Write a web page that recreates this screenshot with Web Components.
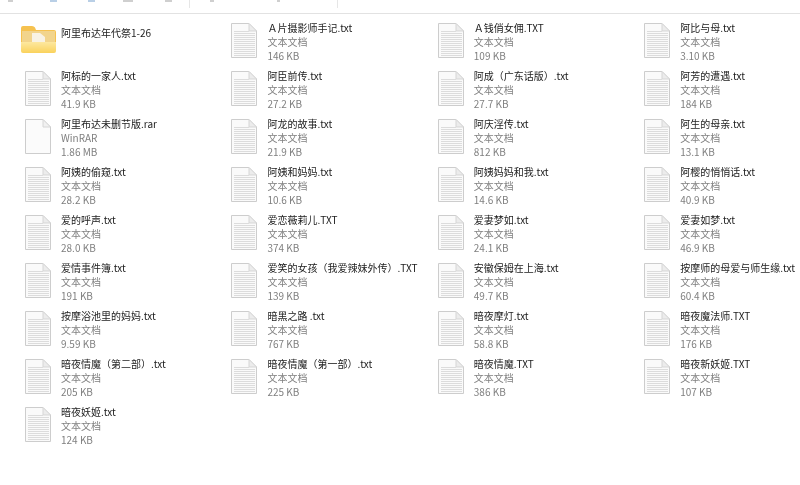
<!DOCTYPE html>
<html>
<head>
<meta charset="utf-8">
<style>
  html, body { margin: 0; background: #fff; }
  body { width: 800px; height: 485px; overflow: hidden; font-family: "Noto Sans CJK SC", "Liberation Sans", sans-serif; }
</style>
</head>
<body>
<ribbon-strip></ribbon-strip>
<file-grid></file-grid>

<script>
const FILES = [
  ["folder", "阿里布达年代祭1-26", "", ""],
  ["txt", "Ａ片摄影师手记.txt", "文本文档", "146 KB"],
  ["txt", "Ａ钱俏女佣.TXT", "文本文档", "109 KB"],
  ["txt", "阿比与母.txt", "文本文档", "3.10 KB"],
  ["txt", "阿标的一家人.txt", "文本文档", "41.9 KB"],
  ["txt", "阿臣前传.txt", "文本文档", "27.2 KB"],
  ["txt", "阿成（广东话版）.txt", "文本文档", "27.7 KB"],
  ["txt", "阿芳的遭遇.txt", "文本文档", "184 KB"],
  ["rar", "阿里布达未删节版.rar", "WinRAR", "1.86 MB"],
  ["txt", "阿龙的故事.txt", "文本文档", "21.9 KB"],
  ["txt", "阿庆淫传.txt", "文本文档", "812 KB"],
  ["txt", "阿生的母亲.txt", "文本文档", "13.1 KB"],
  ["txt", "阿姨的偷窥.txt", "文本文档", "28.2 KB"],
  ["txt", "阿姨和妈妈.txt", "文本文档", "10.6 KB"],
  ["txt", "阿姨妈妈和我.txt", "文本文档", "14.6 KB"],
  ["txt", "阿樱的悄悄话.txt", "文本文档", "40.9 KB"],
  ["txt", "爱的呼声.txt", "文本文档", "28.0 KB"],
  ["txt", "爱恋薇莉儿.TXT", "文本文档", "374 KB"],
  ["txt", "爱妻梦如.txt", "文本文档", "24.1 KB"],
  ["txt", "爱妻如梦.txt", "文本文档", "46.9 KB"],
  ["txt", "爱情事件簿.txt", "文本文档", "191 KB"],
  ["txt", "爱笑的女孩（我爱辣妹外传）.TXT", "文本文档", "139 KB"],
  ["txt", "安徽保姆在上海.txt", "文本文档", "49.7 KB"],
  ["txt", "按摩师的母爱与师生缘.txt", "文本文档", "60.4 KB"],
  ["txt", "按摩浴池里的妈妈.txt", "文本文档", "9.59 KB"],
  ["txt", "暗黑之路 .txt", "文本文档", "767 KB"],
  ["txt", "暗夜摩灯.txt", "文本文档", "58.8 KB"],
  ["txt", "暗夜魔法师.TXT", "文本文档", "176 KB"],
  ["txt", "暗夜情魔（第二部）.txt", "文本文档", "205 KB"],
  ["txt", "暗夜情魔（第一部）.txt", "文本文档", "225 KB"],
  ["txt", "暗夜情魔.TXT", "文本文档", "386 KB"],
  ["txt", "暗夜新妖姬.TXT", "文本文档", "107 KB"],
  ["txt", "暗夜妖姬.txt", "文本文档", "124 KB"]
];

// ruled lines of the text page icon
let ruled = "";
for (let y = 8.5; y < 33; y += 2) {
  ruled += `<path d="M3 ${y}H${y < 10 ? 18 : 24}" stroke="#dcdcdc"/>`;
}

const ICONS = {
  txt: `<svg width="26" height="35" viewBox="0 0 26 35">
    <path d="M.5.5H18L25.5 8V34.500H.5Z" fill="#fafafa" stroke="#cdcdcd"/>
    ${ruled}
    <path d="M18 .5V8H25.5Z" fill="#ececec" stroke="#d6d6d6"/>
  </svg>`,
  rar: `<svg width="26" height="35" viewBox="0 0 26 35">
    <path d="M.5.5H18L25.5 8V34.500H.5Z" fill="#fbfbfb" stroke="#cdcdcd"/>
    <path d="M18 .5V8H25.5Z" fill="#f1f1f1" stroke="#d6d6d6"/>
  </svg>`,
  folder: `<svg width="35" height="27" viewBox="0 0 35 27">
    <defs>
      <linearGradient id="front" x1="0" y1="0" x2="0" y2="1">
        <stop offset="0" stop-color="#fde8a0"/>
        <stop offset="1" stop-color="#fad25c"/>
      </linearGradient>
    </defs>
    <path d="M0 2Q0 0 2 0H11Q13 0 14 1.500L15 4H33Q35 4 35 6V17H0Z" fill="#f6c250"/>
    <rect x="1" y="5" width="33" height="12" fill="#f2d48c"/>
    <path d="M11 7H19L24 11V16H11Z" fill="#f8f2e4"/>
    <path d="M0 16H35V25Q35 27 33 27H2Q0 27 0 25Z" fill="url(#front)"/>
  </svg>`
};

class RibbonStrip extends HTMLElement {
  constructor() {
    super();
    this.shadow = this.attachShadow({mode: 'open'});
    this.shadow.innerHTML = `
      <style>
        :host { display: block; height: 13px; border-bottom: 1px solid #e2e2e2; overflow: hidden; }
        .bar { display: flex; height: 13px; padding-left: 8px; }
        .bit { height: 2px; background: #cfcfcf; }
        .sep { width: 1px; height: 8px; background: #e6e6e6; }
      </style>
      <div class="bar">
        <div class="bit" style="width:5px"></div>
        <div class="bit" style="width:7px;margin-left:37px;background:#b9cfe6"></div>
        <div class="bit" style="width:7px;margin-left:31px;background:#b9cfe6"></div>
        <div class="bit" style="width:10px;margin-left:28px"></div>
        <div class="bit" style="width:7px;margin-left:32px"></div>
        <div class="sep" style="margin-left:17px"></div>
        <div class="bit" style="width:4px;margin-left:20px"></div>
        <div class="bit" style="width:3px;margin-left:63px"></div>
        <div class="sep" style="margin-left:57px"></div>
      </div>`;
  }
}

class FileTile extends HTMLElement {
  constructor() {
    super();
    this.shadow = this.attachShadow({mode: 'open'});
    this.shadow.innerHTML = `
      <style>
        :host { display: flex; gap: 5px; height: 48px; font-size: 10px; line-height: 14px; }
        .icon { width: 36px; flex: none; display: flex; justify-content: center; padding-top: 2px; }
        .icon svg { display: block; }
        :host([kind="folder"]) .icon { padding-top: 5px; }
        :host([kind="folder"]) .text { padding-top: 5px; }
        .name { color: #222; white-space: nowrap; }
        .meta { color: #808080; }
      </style>
      <div class="icon"></div>
      <div class="text">
        <div class="name"></div>
        <div class="meta type"></div>
        <div class="meta size"></div>
      </div>`;
  }

  connectedCallback() {
    this.shadow.querySelector(".icon").innerHTML = ICONS[this.getAttribute("kind")];
    this.shadow.querySelector(".name").textContent = this.getAttribute("name");
    this.shadow.querySelector(".type").textContent = this.getAttribute("type");
    this.shadow.querySelector(".size").textContent = this.getAttribute("size");
  }
}

class FileGrid extends HTMLElement {
  constructor() {
    super();
    this.shadow = this.attachShadow({mode: 'open'});
    this.shadow.innerHTML = `
      <style>
        :host { display: grid; grid-template-columns: repeat(3, 206.4px) 1fr; padding: 7px 0 0 20px; filter: blur(0.3px); }
      </style>
      <slot></slot>`;
  }

  connectedCallback() {
    for (let f of FILES) {
      let tile = document.createElement("file-tile");
      tile.setAttribute("kind", f[0]);
      tile.setAttribute("name", f[1]);
      tile.setAttribute("type", f[2]);
      tile.setAttribute("size", f[3]);
      this.appendChild(tile);
    }
  }
}

customElements.define('ribbon-strip', RibbonStrip);
customElements.define('file-tile', FileTile);
customElements.define('file-grid', FileGrid);
</script>
</body>
</html>
